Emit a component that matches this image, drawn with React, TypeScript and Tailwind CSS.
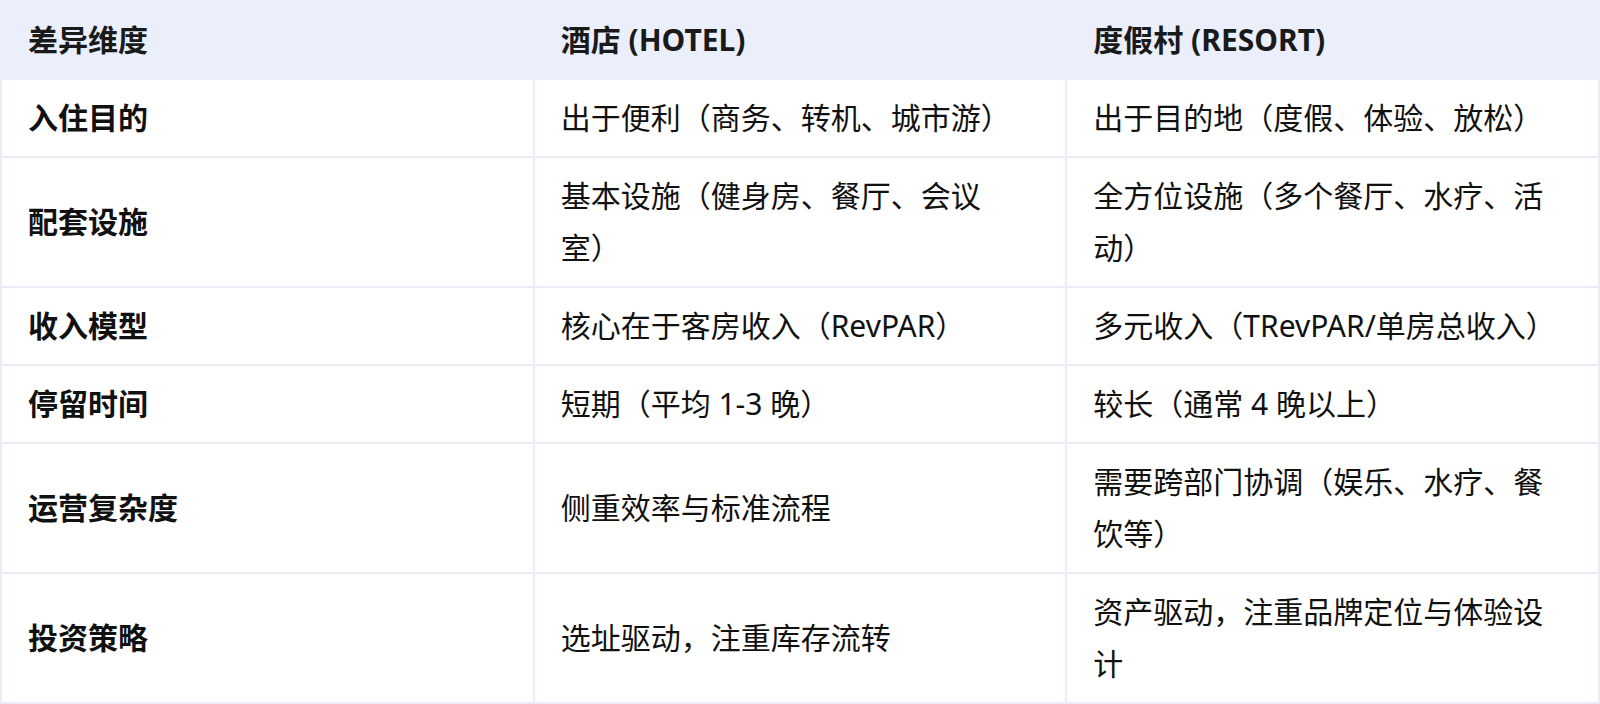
const rows: [string, string, string][] = [
  ["入住目的", "出于便利（商务、转机、城市游）", "出于目的地（度假、体验、放松）"],
  ["配套设施", "基本设施（健身房、餐厅、会议室）", "全方位设施（多个餐厅、水疗、活动）"],
  ["收入模型", "核心在于客房收入（RevPAR）", "多元收入（TRevPAR/单房总收入）"],
  ["停留时间", "短期（平均 1-3 晚）", "较长（通常 4 晚以上）"],
  ["运营复杂度", "侧重效率与标准流程", "需要跨部门协调（娱乐、水疗、餐饮等）"],
  ["投资策略", "选址驱动，注重库存流转", "资产驱动，注重品牌定位与体验设计"],
];

export default function App() {
  return (
    <div
      className="w-[1600px] bg-white text-[30px] leading-[52px] text-[#111111] [text-spacing-trim:space-all]"
      style={{ fontFamily: '"Noto Sans", "Noto Sans CJK SC", sans-serif' }}
    >
      <table className="w-full table-fixed border-collapse">
        <thead>
          <tr className="bg-[#ebeffb]">
            <th className="border-2 border-[#ebeffb] pl-[26px] pr-[30px] py-[12px] text-left font-bold text-[#1a1a1a]">
              差异维度
            </th>
            <th className="border-2 border-[#ebeffb] pl-[26px] pr-[30px] py-[12px] text-left font-bold text-[#1a1a1a]">
              酒店 (HOTEL)
            </th>
            <th className="border-2 border-[#ebeffb] pl-[26px] pr-[30px] py-[12px] text-left font-bold text-[#1a1a1a]">
              度假村 (RESORT)
            </th>
          </tr>
        </thead>
        <tbody>
          {rows.map(([dim, hotel, resort]) => (
            <tr key={dim}>
              {/* 第一列为粗体维度名 */}
              <td className="border-2 border-[#e8edf9] pl-[26px] pr-[30px] py-[12px] align-middle font-bold">
                {dim}
              </td>
              <td className="border-2 border-[#e8edf9] pl-[26px] pr-[30px] py-[12px] align-middle">
                {hotel}
              </td>
              <td className="border-2 border-[#e8edf9] pl-[26px] pr-[30px] py-[12px] align-middle">
                {resort}
              </td>
            </tr>
          ))}
        </tbody>
      </table>
    </div>
  );
}
